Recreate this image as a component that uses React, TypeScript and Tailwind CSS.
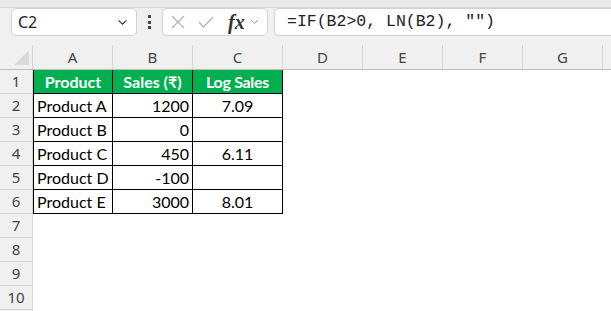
import React from "react";

const cols = [
  { name: "A", w: "w-[80px]" },
  { name: "B", w: "w-[80px]" },
  { name: "C", w: "w-[90px]" },
  { name: "D", w: "w-[80px]" },
  { name: "E", w: "w-[80px]" },
  { name: "F", w: "w-[80px]" },
  { name: "G", w: "w-[80px]" },
  { name: "", w: "w-[80px]" },
];

const data = [
  ["Product A", "1200", "7.09"],
  ["Product B", "0", ""],
  ["Product C", "450", "6.11"],
  ["Product D", "-100", ""],
  ["Product E", "3000", "8.01"],
];

const cellFont = { fontFamily: "Lato, 'Liberation Sans', sans-serif" };
const uiFont = { fontFamily: "'Noto Sans', 'Open Sans', sans-serif" };

function RowHead({ n }: { n?: number }) {
  return (
    <div
      className="w-[33px] h-[24px] shrink-0 bg-[#f0f0f0] border-r border-b border-[#d6d6d6] flex items-center justify-center text-[15px] text-[#444]"
      style={uiFont}
    >
      {n}
    </div>
  );
}

function Chevron({ className }: { className?: string }) {
  return (
    <svg viewBox="0 0 12 8" className={className} fill="none" stroke="currentColor" strokeWidth="1.3">
      <path d="M1.5 1.5 L6 6 L10.5 1.5" />
    </svg>
  );
}

export default function App() {
  return (
    <div className="w-[611px] h-[311px] overflow-hidden bg-white">
      {/* formula bar */}
      <div className="h-[8px] bg-[#e9e9e9] border-b border-[#d9d9d9]" />
      <div className="h-[37px] bg-[#f0f0f0] flex items-start overflow-hidden">
        <div className="ml-[11px] w-[126px] h-[28px] bg-white border border-[#d2d2d2] rounded-[5px] flex items-center justify-between pl-[6px] pr-[8px] shrink-0">
          <span className="text-[16px] text-[#222]" style={uiFont}>C2</span>
          <Chevron className="w-[11px] h-[7px] text-[#333]" />
        </div>
        <div className="ml-[11px] h-[28px] flex flex-col justify-center gap-[2.5px] shrink-0">
          <div className="w-[3px] h-[3px] bg-[#444]" />
          <div className="w-[3px] h-[3px] bg-[#444]" />
          <div className="w-[3px] h-[3px] bg-[#444]" />
        </div>
        <div className="ml-[11px] w-[106px] h-[28px] bg-white border border-[#d2d2d2] rounded-[5px] flex items-center shrink-0">
          <svg viewBox="0 0 14 14" className="ml-[8px] w-[14px] h-[14px] text-[#b3b3b3]" fill="none" stroke="currentColor" strokeWidth="1.2">
            <path d="M1 1 L13 13 M13 1 L1 13" />
          </svg>
          <svg viewBox="0 0 16 12" className="ml-[13px] w-[16px] h-[12px] text-[#b3b3b3]" fill="none" stroke="currentColor" strokeWidth="1.2">
            <path d="M1 6 L5.5 11 L15 1" />
          </svg>
          <span
            className="ml-[14px] text-[20px] italic font-bold text-[#333] leading-none"
            style={{ fontFamily: "'Liberation Serif', serif" }}
          >
            fx
          </span>
          <Chevron className="ml-[5px] w-[9px] h-[6px] text-[#999]" />
        </div>
        <div className="ml-[6px] w-[360px] h-[28px] bg-white border border-[#d2d2d2] rounded-l-[5px] flex items-center pl-[12px] shrink-0">
          <span className="text-[16.5px] text-[#222] whitespace-pre" style={{ fontFamily: "'Liberation Mono', monospace" }}>
            =IF(B2&gt;0, LN(B2), "")
          </span>
        </div>
      </div>

      {/* column headers */}
      <div className="flex h-[25px] bg-[#f0f0f0] border-b border-[#bdbdbd]" style={uiFont}>
        <div className="w-[33px] shrink-0 border-r border-[#d6d6d6] relative">
          <svg viewBox="0 0 16 16" className="absolute right-[3px] bottom-[4px] w-[15px] h-[15px]">
            <path d="M16 0 L16 16 L0 16 Z" fill="#d9d9d9" />
          </svg>
        </div>
        {cols.map((c, i) => (
          <div
            key={i}
            className={`${c.w} shrink-0 border-r border-[#d6d6d6] flex items-center justify-center text-[15px] text-[#444]`}
          >
            {c.name}
          </div>
        ))}
      </div>

      {/* grid rows */}
      <div className="flex" style={cellFont}>
        <RowHead n={1} />
        <div className="w-[80px] h-[24px] bg-[#00b050] border-l border-r border-b border-black flex items-center justify-center text-white font-bold text-[16px]">
          Product
        </div>
        <div className="w-[80px] h-[24px] bg-[#00b050] border-r border-b border-black flex items-center justify-center text-white font-bold text-[16px]">
          Sales (₹)
        </div>
        <div className="w-[90px] h-[24px] bg-[#00b050] border-r border-b border-black flex items-center justify-center text-white font-bold text-[16px] tracking-[-0.3px]">
          Log Sales
        </div>
      </div>
      {data.map((r, i) => (
        <div key={i} className="flex" style={cellFont}>
          <RowHead n={i + 2} />
          <div className="w-[80px] h-[24px] border-l border-r border-b border-black flex items-center pl-[3px] text-[16px] text-black">
            {r[0]}
          </div>
          <div className="w-[80px] h-[24px] border-r border-b border-black flex items-center justify-end pr-[3px] text-[16px] text-black">
            {r[1]}
          </div>
          <div className="w-[90px] h-[24px] border-r border-b border-black flex items-center justify-center text-[16px] text-black">
            {r[2]}
          </div>
        </div>
      ))}
      {[7, 8, 9, 10].map((n) => (
        <div key={n} className="flex">
          <RowHead n={n} />
        </div>
      ))}
      <div className="flex">
        <RowHead />
      </div>
    </div>
  );
}
